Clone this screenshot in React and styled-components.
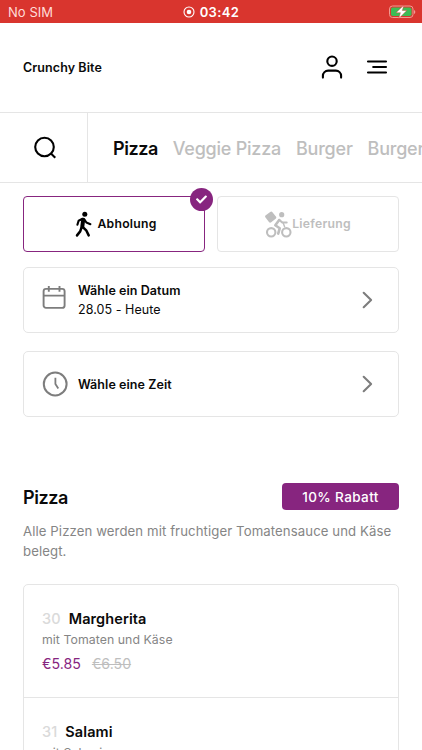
import styled, { createGlobalStyle, ThemeProvider } from 'styled-components';
import { FaCheck } from 'react-icons/fa';

const theme = {
  colors: {
    primary: '#87257f',
    status: '#d9352e',
    border: '#e5e5e5',
    text: '#0a0a0a',
    textSecondary: '#858585',
    muted: '#bebebe',
    faint: '#dadada',
    icon: '#7d7d7d'
  }
};

const GlobalStyle = createGlobalStyle`
  * {
    box-sizing: border-box;
  }

  html, body {
    margin: 0;
    height: 750px;
    overflow: hidden;
    background: #fff;
  }

  body {
    font-family: Inter, sans-serif;
    color: #0a0a0a;
  }

  svg {
    display: block;
    flex-shrink: 0;
  }

  h1, h2, h3, p {
    margin: 0;
  }

  button {
    font-family: inherit;
    background: none;
    border: none;
    padding: 0;
    color: inherit;
  }
`;

const Screen = styled.div`
  width: 422px;
  height: 750px;
  overflow: hidden;
`;

const StatusBar = styled.div`
  display: grid;
  grid-template-columns: 1fr auto 1fr;
  align-items: center;
  height: 23px;
  padding: 1px 6px 0 8px;
  background: ${({ theme }) => theme.colors.status};
  color: #fff;
  font-size: 13px;
`;

const Carrier = styled.span`
  color: #ffdcd8;
  letter-spacing: 0.05px;
`;

const Clock = styled.div`
  display: flex;
  align-items: center;
  gap: 5px;
  padding-right: 2px;
  font-weight: 600;
  letter-spacing: 0.4px;
`;

const BatterySlot = styled.div`
  display: flex;
  justify-content: flex-end;
`;

const Header = styled.header`
  display: flex;
  align-items: center;
  justify-content: space-between;
  height: 90px;
  padding: 0 34px 1px 23px;
  border-bottom: 1px solid ${({ theme }) => theme.colors.border};
`;

const Brand = styled.h1`
  font-size: 12.5px;
  font-weight: 600;
  letter-spacing: 0.08px;
`;

const HeaderActions = styled.div`
  display: flex;
  align-items: center;
  gap: 22px;
`;

const CategoryBar = styled.nav`
  display: flex;
  height: 70px;
  border-bottom: 1px solid ${({ theme }) => theme.colors.border};
`;

const SearchButton = styled.button`
  display: flex;
  align-items: center;
  justify-content: center;
  width: 88px;
  padding-left: 2px;
  flex-shrink: 0;
  border-right: 1px solid ${({ theme }) => theme.colors.border};
`;

const Categories = styled.div`
  display: flex;
  align-items: center;
  gap: 15px;
  padding: 2px 0 0 25px;
  overflow: hidden;
`;

const Category = styled.button`
  flex-shrink: 0;
  font-size: 18px;
  font-weight: ${({ $active }) => ($active ? 600 : 500)};
  letter-spacing: ${({ $active }) => ($active ? -0.45 : -0.23)}px;
  color: ${({ theme, $active }) => ($active ? theme.colors.text : theme.colors.muted)};
`;

const Content = styled.main`
  padding: 13px 23px 0;
`;

const Options = styled.div`
  display: grid;
  grid-template-columns: 1fr 1fr;
  gap: 12px;
`;

const Option = styled.button`
  position: relative;
  display: flex;
  align-items: center;
  justify-content: center;
  gap: ${({ $gap }) => $gap}px;
  height: 56px;
  padding-left: ${({ $active }) => ($active ? 4 : 0)}px;
  border: 1px solid ${({ theme, $active }) => ($active ? theme.colors.primary : theme.colors.border)};
  border-radius: 4px;
  font-size: 12.2px;
  font-weight: 600;
  line-height: 15px;
  letter-spacing: 0.25px;
  color: ${({ theme, $active }) => ($active ? theme.colors.text : theme.colors.muted)};
`;

const OptionLabel = styled.span`
  padding-bottom: 1px;
`;

const CheckBadge = styled.span`
  position: absolute;
  top: -9px;
  right: -9px;
  display: flex;
  align-items: center;
  justify-content: center;
  width: 23px;
  height: 23px;
  border-radius: 50%;
  background: ${({ theme }) => theme.colors.primary};
  color: #fff;
`;

const Picker = styled.button`
  display: flex;
  align-items: center;
  width: 100%;
  height: 66px;
  margin-top: ${({ $top }) => $top}px;
  padding: 0 25px 0 18px;
  border: 1px solid ${({ theme }) => theme.colors.border};
  border-radius: 5px;
  text-align: left;
  color: ${({ theme }) => theme.colors.icon};
`;

const PickerText = styled.div`
  flex: 1;
  margin-left: 10px;
  font-size: 12.5px;
  line-height: 19px;
  letter-spacing: 0.06px;
  color: ${({ theme }) => theme.colors.text};

  strong {
    display: block;
    font-weight: 600;
  }
`;

const SectionHeader = styled.div`
  display: flex;
  align-items: center;
  justify-content: space-between;
  margin-top: 66px;
`;

const SectionTitle = styled.h2`
  padding-top: 2px;
  font-size: 18px;
  font-weight: 600;
  letter-spacing: -0.4px;
`;

const Discount = styled.span`
  width: 117px;
  height: 27px;
  border-radius: 4px;
  background: ${({ theme }) => theme.colors.primary};
  color: #fff;
  font-size: 13.5px;
  font-weight: 500;
  line-height: 28px;
  letter-spacing: 0.4px;
  text-align: center;
`;

const Description = styled.p`
  margin-top: 11px;
  font-size: 13.2px;
  line-height: 20px;
  letter-spacing: 0.09px;
  color: ${({ theme }) => theme.colors.textSecondary};
`;

const Menu = styled.div`
  margin-top: 23px;
  border: 1px solid ${({ theme }) => theme.colors.border};
  border-radius: 5px;
`;

const MenuItem = styled.article`
  height: 113px;
  padding: 23px 18px 0;
  border-bottom: 1px solid ${({ theme }) => theme.colors.border};
`;

const ItemName = styled.h3`
  display: flex;
  gap: 8px;
  font-size: 14.5px;
  font-weight: 600;
  line-height: 22px;
  letter-spacing: 0.1px;

  span {
    color: ${({ theme }) => theme.colors.faint};
    font-weight: 500;
  }
`;

const ItemDetails = styled.p`
  font-size: 12.3px;
  line-height: 20px;
  letter-spacing: 0.06px;
  color: ${({ theme }) => theme.colors.textSecondary};
`;

const Prices = styled.div`
  display: flex;
  gap: 11px;
  margin-top: 4px;
  font-size: 14.2px;
  line-height: 20px;
  color: ${({ theme }) => theme.colors.primary};

  s {
    color: ${({ theme }) => theme.colors.muted};
  }
`;

const RecordIcon = () => (
  <svg width="12" height="12" viewBox="0 0 12 12">
    <circle cx="6" cy="6" r="5" fill="none" stroke="#fff" strokeWidth="1.1" />
    <circle cx="6" cy="6" r="2.3" fill="#fff" />
  </svg>
);

const BatteryIcon = () => (
  <svg width="28" height="14" viewBox="0 0 28 14">
    <rect x="1.5" y="1" width="23.5" height="11.5" rx="3" fill="none" stroke="#f09a91" />
    <rect x="3" y="2.5" width="20.5" height="8.5" rx="1.8" fill="#3dbb55" />
    <path d="M26 5v4q1.3-.7 1.3-2T26 5Z" fill="#f09a91" />
    <path d="M15.8.2 8 7.7h4.4L10.8 13.4l8-7.9h-4.5Z" fill="#fff" stroke="#d9352e" strokeWidth=".4" />
  </svg>
);

const UserIcon = () => (
  <svg width="24" height="26" viewBox="0 0 24 26" fill="none" stroke="#000" strokeWidth="2.1" strokeLinecap="round">
    <circle cx="12" cy="7.2" r="4.7" />
    <path d="M2.9 23.6v-1.8a5.2 5.2 0 0 1 5.2-5.2h7.8a5.2 5.2 0 0 1 5.2 5.2v1.8" />
  </svg>
);

const MenuIcon = () => (
  <svg width="22" height="16" viewBox="0 0 22 16" fill="none" stroke="#000" strokeWidth="2.1" strokeLinecap="round">
    <path d="M2 2.5h18M7.2 8H20M2 13.5h18" />
  </svg>
);

const SearchIcon = () => (
  <svg width="24" height="24" viewBox="0 0 24 24" fill="none" stroke="#000" strokeWidth="2.1" strokeLinecap="square">
    <circle cx="11.5" cy="11" r="9.3" />
    <path d="m18.2 17.8 3.3 3.3" />
  </svg>
);

const WalkIcon = () => (
  <svg width="18" height="27" viewBox="0 0 18 27" fill="none" stroke="#000" strokeLinecap="round" strokeLinejoin="round">
    <circle cx="9.8" cy="3.2" r="2.5" fill="#000" stroke="none" />
    <path d="M8.2 8.8 7.3 15.5" strokeWidth="4" />
    <path d="M7.5 7.8 3.6 9.7l-1.2 4.1M9.3 8.3l2.1 3.2 4 1.7" strokeWidth="2.1" />
    <path d="m6.4 16.8-1.2 3.6-3.2 4M7.6 15.8l3.6 3.5 2.5 5.1" strokeWidth="2.5" />
  </svg>
);

const CourierIcon = () => (
  <svg width="27" height="27" viewBox="0 0 27 27" fill="none" stroke="currentColor" strokeLinecap="round" strokeLinejoin="round">
    <rect x="1.3" y="1.7" width="8.8" height="8.8" rx="1.6" transform="rotate(-38 5.7 6.1)" fill="currentColor" stroke="none" />
    <circle cx="16.7" cy="3.7" r="2.6" fill="currentColor" stroke="none" />
    <circle cx="6.2" cy="21.3" r="4.2" strokeWidth="2.1" />
    <circle cx="21.3" cy="21.3" r="4.2" strokeWidth="2.1" />
    <path d="m14.2 9-3.9 5.2 4.4 3.1-1.5 5.3" strokeWidth="2.6" />
    <path d="m14 8.8 3.5 2.8h4.2" strokeWidth="2" />
    <path d="m18.2 12 1.4 3.8" strokeWidth="1.4" />
  </svg>
);

const CalendarIcon = () => (
  <svg width="26" height="30" viewBox="0 0 26 30" fill="none" stroke="currentColor" strokeWidth="1.9">
    <rect x="1.6" y="3.9" width="21" height="19" rx="2.4" />
    <path d="M1.6 10.6h21M6.8 1.1v5.6M17.5 1.1v5.6" />
  </svg>
);

const ClockIcon = () => (
  <svg width="26" height="26" viewBox="0 0 26 26" fill="none" stroke="currentColor" strokeWidth="2">
    <circle cx="13.2" cy="13" r="11.4" />
    <path d="M13.4 6.7V13l2.9 4.5" strokeWidth="1.8" />
  </svg>
);

const ChevronIcon = () => (
  <svg width="12" height="20" viewBox="0 0 12 20" fill="none" stroke="currentColor" strokeWidth="2.1" strokeLinecap="round" strokeLinejoin="round">
    <path d="m2.7 2.8 7.4 7.2-7.4 7.2" />
  </svg>
);

const categories = ['Pizza', 'Veggie Pizza', 'Burger', 'Burger Menü'];

const items = [
  { id: 30, name: 'Margherita', details: 'mit Tomaten und Käse', price: '€5.85', oldPrice: '€6.50' },
  { id: 31, name: 'Salami', details: 'mit Salami', price: '€6.75', oldPrice: '€7.50' }
];

export default function App() {
  return (
    <ThemeProvider theme={theme}>
      <GlobalStyle />
      <Screen>
        <StatusBar>
          <Carrier>No SIM</Carrier>
          <Clock>
            <RecordIcon />
            03:42
          </Clock>
          <BatterySlot>
            <BatteryIcon />
          </BatterySlot>
        </StatusBar>
        <Header>
          <Brand>Crunchy Bite</Brand>
          <HeaderActions>
            <UserIcon />
            <MenuIcon />
          </HeaderActions>
        </Header>
        <CategoryBar>
          <SearchButton>
            <SearchIcon />
          </SearchButton>
          <Categories>
            {categories.map((category, index) => (
              <Category key={category} $active={index === 0}>{category}</Category>
            ))}
          </Categories>
        </CategoryBar>
        <Content>
          <Options>
            <Option $active $gap={4}>
              <WalkIcon />
              <OptionLabel>Abholung</OptionLabel>
              <CheckBadge>
                <FaCheck size={11} />
              </CheckBadge>
            </Option>
            <Option $gap={0}>
              <CourierIcon />
              <OptionLabel>Lieferung</OptionLabel>
            </Option>
          </Options>
          <Picker $top={15}>
            <CalendarIcon />
            <PickerText>
              <strong>Wähle ein Datum</strong>
              28.05 - Heute
            </PickerText>
            <ChevronIcon />
          </Picker>
          <Picker $top={18}>
            <ClockIcon />
            <PickerText>
              <strong>Wähle eine Zeit</strong>
            </PickerText>
            <ChevronIcon />
          </Picker>
          <SectionHeader>
            <SectionTitle>Pizza</SectionTitle>
            <Discount>10% Rabatt</Discount>
          </SectionHeader>
          <Description>Alle Pizzen werden mit fruchtiger Tomatensauce und Käse belegt.</Description>
          <Menu>
            {items.map((item) => (
              <MenuItem key={item.id}>
                <ItemName>
                  <span>{item.id}</span>
                  {item.name}
                </ItemName>
                <ItemDetails>{item.details}</ItemDetails>
                <Prices>
                  {item.price}
                  <s>{item.oldPrice}</s>
                </Prices>
              </MenuItem>
            ))}
          </Menu>
        </Content>
      </Screen>
    </ThemeProvider>
  );
}
